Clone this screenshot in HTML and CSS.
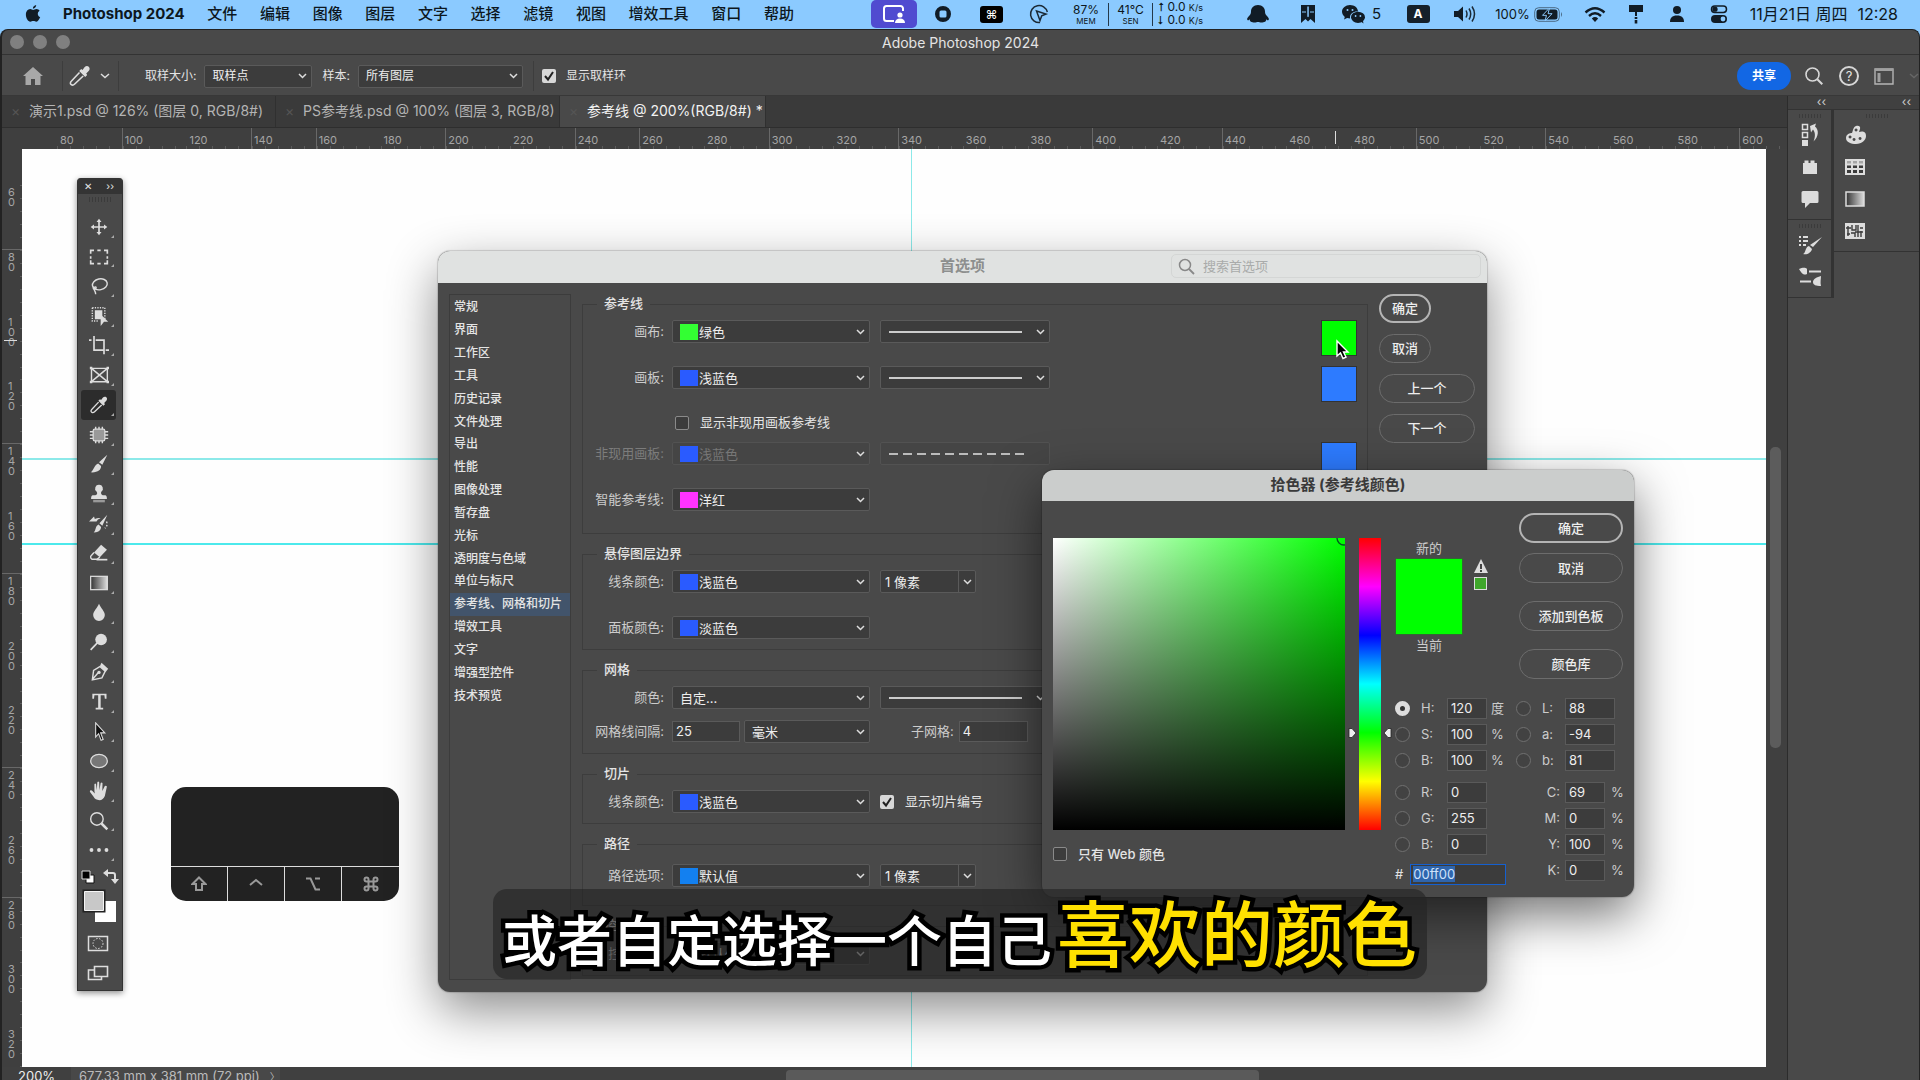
FILE: index.html
```html
<!DOCTYPE html>
<html lang="zh-CN">
<head>
<meta charset="utf-8">
<title>Adobe Photoshop 2024</title>
<meta name="viewport" content="width=device-width, initial-scale=1">
<link rel="stylesheet" href="styles.css">
</head>
<body>
<header class="menubar">
  <svg class="apple" viewBox="0 0 18 20"><path d="M12.6 0c.1 2-1.700 4-3.700 4C8.700 2 10.600.2 12.600 0zM9.200 5.400c.9 0 2-1 3.700-1 1.500 0 2.800.8 3.500 1.900-3 1.900-2.400 6 .7 7.200-.8 2.300-2.500 5.200-4.300 5.200-1.300 0-1.800-.8-3.400-.8s-2.100.8-3.400.8C3.600 18.700 1 14.700 1 10.900 1 7 3.300 4.600 5.800 4.500c1.500 0 2.500.9 3.400.9z"/></svg>
  <nav class="menus">
    <a href="#" class="appname">Photoshop 2024</a>
    <a href="#">文件</a><a href="#">编辑</a><a href="#">图像</a><a href="#">图层</a><a href="#">文字</a><a href="#">选择</a><a href="#">滤镜</a><a href="#">视图</a><a href="#">增效工具</a><a href="#">窗口</a><a href="#">帮助</a>
  </nav>
  <div class="status">
    <span class="sharing"><svg width="24" height="20" viewBox="0 0 24 20"><path d="M12 17H4.500A2.500 2.500 0 0 1 2 14.500v-10A2.500 2.500 0 0 1 4.500 2h14A2.500 2.500 0 0 1 21 4.500V7" fill="none" stroke="#fff" stroke-width="2"/><circle cx="18" cy="11" r="2.600" fill="#fff"/><path d="M13 19c0-3 2-4.500 5-4.500s5 1.500 5 4.500z" fill="#fff"/></svg></span>
    <svg width="18" height="18" viewBox="0 0 18 18"><path fill-rule="evenodd" d="M9 1a8 8 0 1 0 0 16A8 8 0 0 0 9 1zM7 5.500h4q1.500 0 1.500 1.500v4q0 1.500-1.500 1.500H7q-1.500 0-1.500-1.500V7q0-1.500 1.500-1.500z"/></svg>
    <span class="cmdbox">⌘</span>
    <svg width="20" height="20" viewBox="0 0 20 20"><path d="M11 18.500A8.500 8.500 0 1 1 18.300 8M7.500 7l9.500 3-4.300 1.800L11 16.500z" fill="none" stroke="#1b2a36" stroke-width="1.500"/></svg>
    <span class="stat">87%<small>MEM</small></span>
    <span class="stat stat--bars">41°C<small>SEN</small></span>
    <span class="net"><span>⭡ 0.0 <small>K/s</small></span><span>⭣ 0.0 <small>K/s</small></span></span>
    <span></span>
    <svg width="26" height="20" viewBox="0 0 26 20"><path d="M13 1c4.500 0 7 3 7 6.500 0 2 .5 3 2 4.500 1.500 1.600 2.500 3 1.500 4-.7.600-1.700-.3-2.500-.8 1 2-2 3.300-4.500 3.300-1.500 0-2.500-.5-3.500-.5s-2 .5-3.500.5c-2.500 0-5.500-1.300-4.500-3.300-.8.500-1.800 1.400-2.500.8-1-1 0-2.400 1.500-4 1.500-1.500 2-2.500 2-4.500C6 4 8.500 1 13 1z"/></svg>
    <svg width="18" height="18" viewBox="0 0 18 18"><path fill-rule="evenodd" d="M2 0h14v18l-4.500-4-2.500 2.500L6.500 14 2 18zM8.300 1.500v10L9 12.200l.8-.7v-10zM3 6.500h4v1H3zm8 0h4v1h-4z"/></svg>
    <span class="chat"><svg width="25" height="20" viewBox="0 0 25 20"><path d="M9 1c4.400 0 8 2.800 8 6.500h-1c-4 0-7 2.500-7 6 0 .3 0 .7.100 1-1 0-2-.1-3-.4L3 15.500l.8-2.600C2.100 11.700 1 9.700 1 7.600 1 4 4.600 1 9 1z"/><ellipse cx="17" cy="13.300" rx="7" ry="5.600"/><path d="M19 17l3.500 2.500-.7-3.500z"/><g fill="#8bcaff"><circle cx="6.500" cy="6" r="1"/><circle cx="11.500" cy="6" r="1"/><circle cx="14.600" cy="12" r=".9"/><circle cx="19.400" cy="12" r=".9"/></g></svg>5</span>
    <span class="imebox">A</span>
    <svg width="23" height="18" viewBox="0 0 23 18"><path d="M1 6h4l5-4.500v15L5 12H1z"/><path d="M13 5.500q2 3.500 0 7M16 3.500q3.400 5.500 0 11M19 1.500q5 7.500 0 15" fill="none" stroke="#1b2a36" stroke-width="1.500"/></svg>
    <span class="power">100%<svg width="29" height="15" viewBox="0 0 29 15"><rect x=".7" y=".7" width="24.600" height="13.600" rx="4" fill="none" stroke="#4b6a85"/><rect x="2.500" y="2.500" width="21" height="10" rx="2.500"/><path d="M27 5q2 2.500 0 5z" fill="#4b6a85"/><path d="M15.500 1l-7 7.300h4L11 14l7-7.300h-4z" fill="#111" stroke="#8bcaff"/></svg></span>
    <svg width="22" height="17" viewBox="0 0 22 17"><path d="M1.500 6.500q9.500-8.500 19 0M5 10q6-5.500 12 0" fill="none" stroke="#111c26" stroke-width="2.400"/><path d="M7.800 12.500q3.200-2.800 6.400 0L11 16z"/></svg>
    <svg width="16" height="20" viewBox="0 0 16 20"><path d="M1 1h14v7H1zM7 8h2v4H7zM6.700 13h2.600v2H6.700zM6.700 16h2.600v3.500H6.700z"/></svg>
    <svg width="16" height="18" viewBox="0 0 16 18"><circle cx="8" cy="5" r="4"/><path d="M1 17c0-4 2-6.500 7-6.500s7 2.500 7 6.500z"/></svg>
    <svg width="18" height="20" viewBox="0 0 18 20"><rect x="1.500" y="2" width="15" height="6.500" rx="3.200" fill="none" stroke="#111c26" stroke-width="1.500"/><circle cx="5" cy="5.200" r="2.600"/><rect x="1" y="11" width="16" height="8" rx="4"/><circle cx="13" cy="15" r="2.400" fill="#8bcaff"/></svg>
    <span class="clock"><span>11月21日 周四</span><time>12:28</time></span>
  </div>
</header>

<main class="window">
  <div class="titlebar">
    <span class="lights"><i></i><i></i><i></i></span>
    <h1>Adobe Photoshop 2024</h1>
    <span></span>
  </div>

  <div class="options">
    <svg class="home" width="22" height="20" viewBox="0 0 22 20"><path d="M11 1l10 9h-2.500v9H13v-6H9v6H3.500v-9H1z" fill="#a8a8a8"/></svg>
    <span class="dropper"><svg width="24" height="24"><use href="#eyedropper"/></svg><svg class="chev" viewBox="0 0 10 6"><path d="M1 1l4 3.500L9 1"/></svg></span>
    <label for="size">取样大小:</label>
    <select id="size" class="size"><option>取样点</option></select>
    <label for="sample">样本:</label>
    <select id="sample" class="sample"><option>所有图层</option></select>
    <label class="ring"><input type="checkbox" checked>显示取样环</label>
    <div class="options-end">
      <button class="share" type="button">共享</button>
      <svg width="20" height="20" viewBox="0 0 20 20"><circle cx="8.500" cy="8.500" r="6.500" fill="none" stroke="#d6d6d6" stroke-width="1.600"/><path d="M13.300 13.300l5 5" stroke="#d6d6d6" stroke-width="2"/></svg>
      <span class="help">?</span>
      <svg width="20" height="17" viewBox="0 0 20 17"><path d="M1 1h18v15H1z" fill="none" stroke="#b5b5b5" stroke-width="1.400"/><path d="M1 1h18v2H1zM3.500 5h3v9h-3z" fill="#a0a0a0"/></svg>
      <svg class="chev dim" viewBox="0 0 10 6"><path d="M1 1l4 3.500L9 1"/></svg>
    </div>
  </div>

  <div class="workspace">
    <section class="document">
      <nav class="tabs">
        <a href="#" class="tab tab1"><i>×</i>演示1.psd @ 126% (图层 0, RGB/8#)</a>
        <a href="#" class="tab tab2"><i>×</i>PS参考线.psd @ 100% (图层 3, RGB/8)</a>
        <a href="#" class="tab tab3 active"><i>×</i>参考线 @ 200%(RGB/8#) *</a>
      </nav>
      <div class="hruler">
        <ol>
          <li>80</li><li class="t">100</li><li>120</li><li class="t">140</li><li class="t">160</li><li>180</li><li class="t">200</li><li>220</li><li class="t">240</li><li class="t">260</li><li>280</li><li class="t">300</li><li>320</li><li class="t">340</li><li>360</li><li>380</li><li class="t">400</li><li>420</li><li class="t">440</li><li class="here">460</li><li>480</li><li class="t">500</li><li>520</li><li class="t">540</li><li>560</li><li>580</li><li class="t">600</li>
        </ol>
      </div>
      <div class="view">
        <ol class="vruler">
          <li>60</li><li class="t">80</li><li class="here">100</li><li>120</li><li class="t">140</li><li>160</li><li class="t">180</li><li>200</li><li>220</li><li class="t">240</li><li>260</li><li class="t">280</li><li>300</li><li>320</li>
        </ol>
        <div class="canvas"><i class="guide g1"></i><i class="guide g2"></i><i class="guide g3"></i></div>
        <div class="vscroll"><i></i></div>
      </div>
      <footer class="statusbar">
        <span class="zoomlevel">200%</span><span class="docsize">677.33 mm x 381 mm (72 ppi)<b>〉</b></span>
        <i class="hthumb"></i>
      </footer>
    </section>
    <aside class="dock">
      <div class="dock-col">
        <div class="dock-head">‹‹</div>
        <div class="dock-group">
          <svg width="20" height="26" viewBox="0 0 20 26"><path d="M2.500 2.500h5v5h-5zM2.500 10.500h5v5h-5z" fill="none" stroke="#ddd" stroke-width="1.500"/><path d="M2 18h6v6H2zM10 4l6-2.500-1 3c4 3 4 10-1.500 15 2-5 2-9-.5-12l-2 3z" fill="#ddd"/></svg>
          <svg width="18" height="16" viewBox="0 0 18 16"><path d="M2 4h1.500V1.500h4V4h2V1.500h4V4H16v11H2z" fill="#ddd"/></svg>
          <svg width="20" height="20" viewBox="0 0 20 20"><path d="M3 2h14q1.500 0 1.500 1.500v9Q18.500 14 17 14h-7l-5 5v-5H3q-1.500 0-1.500-1.500v-9Q1.500 2 3 2z" fill="#ddd"/></svg>
        </div>
        <div class="dock-group">
          <svg width="26" height="22" viewBox="0 0 26 22"><path d="M2 2h2v2H2zM6 2h5v2H6zM2 6h2v2H2zM6 6h5v2H6zM2 10h2v2H2zM6 10h3v2H6zM25 3l-9 10-3-2zM12 12l3 3c-1 4-5 6-9 5 3-1 2-7 6-8z" fill="#ddd"/></svg>
          <svg width="26" height="22" viewBox="0 0 26 22"><path d="M2 3c3-1 6-2 8 0v5C6 10 4 6 2 3zM12 4.500h12v2H12zM3 14.500h11v2H3zM24 10c0 3-1 6 0 10-5 0-8-1-8-4s4-5 8-6z" fill="#ddd"/></svg>
        </div>
      </div>
      <div class="dock-col dock-col--wide">
        <div class="dock-head">‹‹</div>
        <div class="dock-group">
          <svg width="22" height="20" viewBox="0 0 22 20"><path fill-rule="evenodd" d="M11 1c2-1 5 0 4 3l-1 3c3-1 7-1 7 4 0 4-4 8-10 8-5 0-10-2-10-6s4-5 6-5c1-2 1-6 4-7zM5 10.500a1.500 1.500 0 1 0 .1 0zM9 13a1.500 1.500 0 1 0 .1 0zM15 12a1.500 1.500 0 1 0 .1 0zM11 3.500a1.500 1.500 0 1 0 .1 0z" fill="#ddd"/></svg>
          <svg width="20" height="16" viewBox="0 0 20 16"><path d="M0 0h20v16H0z" fill="#ddd"/><path d="M2 2h4v2.500H2zM8 2h4v2.500H8zM14 2h4v2.500h-4z" fill="#a5a5a5"/><path d="M2 6.500h4V9H2zM8 6.500h4V9H8zM14 6.500h4V9h-4zM2 11h4v3H2zM8 11h4v3H8zM14 11h4v3h-4z" fill="#3b3b3b"/></svg>
          <svg width="20" height="16" viewBox="0 0 20 16"><rect x="1" y="1" width="18" height="14" fill="url(#grad)" stroke="#ddd" stroke-width="1.500"/></svg>
          <svg width="20" height="16" viewBox="0 0 20 16"><path d="M0 0h20v16H0z" fill="#ddd"/><path d="M3 3v10M1 5h5M7 2v5h4V2M6 10h4v4M13 2v12M15 5h3M16 8v6M10 9h8M2 11h3" stroke="#3b3b3b" stroke-width="1.400" fill="none"/></svg>
        </div>
      </div>
    </aside>
  </div>
</main>

<!-- floating tool palette -->
<aside class="tools">
  <div class="tools-head"><span>✕</span><span>››</span></div>
  <div class="grip"></div>
  <ul>
    <li><svg viewBox="0 0 24 24"><path d="M12 2l3 4h-2v5h5V9l4 3-4 3v-2h-5v5h2l-3 4-3-4h2v-5H6v2l-4-3 4-3v2h5V6H9z"/></svg></li>
    <li><svg viewBox="0 0 24 24"><path d="M2 8V4h4M10 4h4M18 4h4v4M22 11v3M22 16v4h-4M14 20h-4M6 20H2v-4M2 14v-3" class="ln"/></svg></li>
    <li><svg viewBox="0 0 24 24"><ellipse cx="13" cy="10" rx="9" ry="6.500" class="ln thin" transform="rotate(-12 13 10)"/><path d="M6 13c-2 2 0 4 2 2s-2-3-2 0 2 3 2 7" class="ln thin"/></svg></li>
    <li><svg viewBox="0 0 24 24"><path d="M4 2h15v14M4 2v16h8" class="ln thin" stroke-dasharray="1.500 1.500"/><path d="M7 5h9v8l-2-2v5H7zM14 10l9 9h-5l-4 5z"/></svg></li>
    <li><svg viewBox="0 0 24 24"><path d="M6 0v17h12M0 5h3M8 5h10v17M20 17h4" class="ln"/></svg></li>
    <li><svg viewBox="0 0 24 24"><path d="M3 4h19v16H3zM3 4l19 16M22 4L3 20" class="ln thin"/><path d="M1 2h3v3H1zM21 2h3v3h-3zM1 19h3v3H1zM21 19h3v3h-3z"/></svg></li>
    <li class="on"><svg viewBox="0 0 24 24"><g id="eyedropper" fill="#ddd"><path d="M20.500 2.500c-1.300-1-2.800-.5-4 .8L14.500 6l-1.300-1-2 2 6 6 2-2-1-1.400 2-2c1.800-1.500 2-3.700.3-5.100z"/><path d="M11.500 8.500l-8 8.500c-1.500 1.500-1.500 3 0 3.800 1 .6 2.200.2 3.200-.8l8.500-8" fill="none" stroke="#ddd" stroke-width="1.600"/></g></svg></li>
    <li><svg viewBox="0 0 24 24"><rect x="5" y="5" width="14" height="14" rx="2" fill="#999" stroke="#ddd" stroke-width="1.500"/><path d="M8 2v3M12 2v3M16 2v3M8 19v3M12 19v3M16 19v3M1 8h4M1 12h4M1 16h4M19 8h4M19 12h4M19 16h4" class="ln thin"/></svg></li>
    <li><svg viewBox="0 0 24 24"><path d="M22 1l-6 12-4-3zM11 11.500l3.500 3c0 5-4 8-12.500 7.500 4-2 4-9 9-10.500z"/></svg></li>
    <li><svg viewBox="0 0 24 24"><path d="M12 1a4.500 4.500 0 0 1 3 8c-1.500 2 0 4 1.500 4.500h3q2 0 2 4.500h-19q0-4.500 2-4.500h3C10 13 10.500 11 9 9A4.500 4.500 0 0 1 12 1z"/><path d="M5 19h14v3H5z" fill="#999"/></svg></li>
    <li><svg viewBox="0 0 24 24"><path d="M22 1l-6 13-3.500-3zM11.500 12.500l3 3c0 4-4 7-9 6.500 3-2 2-8 6-9.500zM0 9l6-6 1 3q4-2 7-1-4 1-5 4z"/><path d="M21 9q2 5-2 8" class="ln thin" stroke-dasharray="2 2"/></svg></li>
    <li><svg viewBox="0 0 24 24"><path d="M14.500 2l7 6-8.500 9-7-5.500z"/><path d="M6 11.500L2 16q-.5 2 1.500 3.500h6L13 17" class="ln thin"/><path d="M9 19h13v2H9z"/></svg></li>
    <li><svg viewBox="0 0 24 24"><rect x="2" y="4" width="20" height="16" fill="url(#grad)" stroke="#ddd" stroke-width="1.500"/></svg></li>
    <li><svg viewBox="0 0 24 24"><path d="M12 1c2 5 7 9 7 13.500a7 7 0 0 1-14 0C5 10 10 6 12 1z"/></svg></li>
    <li><svg viewBox="0 0 24 24"><circle cx="14.500" cy="9" r="7"/><path d="M10 13l-8 8.500" class="ln"/></svg></li>
    <li><svg viewBox="0 0 24 24"><path d="M13 5.500L5.500 10 4 21.500 15.500 19l4-8zM4 21l7-8" class="ln thin"/><circle cx="12" cy="12.500" r="2"/><path d="M15 1l8 7-3 4-7-7z"/></svg></li>
    <li><svg viewBox="0 0 24 24"><path d="M4 2h17v6h-2l-.5-4H14v15h3v2H8v-2h3V4H6.500L6 8H4z"/></svg></li>
    <li><svg viewBox="0 0 24 24"><path d="M8 1l11 12h-5l3 8-2.500 1-3-8L8 18z" fill="#111" stroke="#ddd" stroke-width="1.300"/></svg></li>
    <li><svg viewBox="0 0 24 24"><ellipse cx="12" cy="12" rx="10" ry="8" fill="#777" stroke="#ddd" stroke-width="1.500"/></svg></li>
    <li><svg viewBox="0 0 24 24"><path d="M6.500 12V4q1-2 2 0l.8 7L10 1.500q1-2 2.200 0l.3 9.500L14 2.500q1.200-1.500 2.200 0L16 12l3-6q1.500-1 2.500.5L19 18q-2 5-6.500 5-5 0-7-4L1 13q0-2.500 2.500-1.500L7 15z"/></svg></li>
    <li><svg viewBox="0 0 24 24"><circle cx="9.500" cy="9.500" r="7.500" class="ln thin"/><path d="M15 15l7 7" stroke="#ddd" stroke-width="3"/></svg></li>
    <li><svg viewBox="0 0 24 24"><circle cx="3" cy="12" r="2.300"/><circle cx="12" cy="12" r="2.300"/><circle cx="21" cy="12" r="2.300"/></svg></li>
  </ul>
  <svg class="swatches" viewBox="0 3 44 125"><path d="M8 13h8v8H8z" fill="#fff" stroke="#111"/><path d="M4 9h8v8H4z" fill="#000" stroke="#ddd"/><path d="M29 11h6q2 0 2 2v7" fill="none" stroke="#ddd" stroke-width="2"/><path d="M25 11l5-4v8zM33 17h8l-4 5z" fill="#ddd"/><path d="M17 39h21v21H17z" fill="#fff"/><path d="M5.500 28.500h21v21h-21z" fill="#c8c8c8" stroke="#222" stroke-width="2"/><path d="M6.500 29.500h19v19h-19z" fill="none" stroke="#f5f5f5"/><path d="M10.500 74.500h19v14h-19z" fill="none" stroke="#ddd" stroke-width="1.500"/><circle cx="20" cy="81.500" r="5" fill="none" stroke="#ddd" stroke-dasharray="1.500 1.500"/><path d="M16.500 104.500h13v10h-13zM16 108h-5.500v9.500h13V115" fill="none" stroke="#ddd" stroke-width="1.600"/></svg>
</aside>

<!-- modifier key display -->
<div class="keys"><div class="keys-out"></div><div class="keys-row"><span><svg viewBox="0 0 16 16"><path d="M8 1.500L14.500 8H11v6H5V8H1.500z"/></svg></span><span><svg viewBox="0 0 16 16"><path d="M2 9l6-5 6 5"/></svg></span><span><svg viewBox="0 0 16 16"><path d="M1 2.500h4.500l5 11H15M10 2.500h5"/></svg></span><span><svg viewBox="0 0 16 16"><path d="M5.500 5.500h5v5h-5zM5.500 5.500h-2a2 2 0 1 1 2-2zM10.500 5.500v-2a2 2 0 1 1 2 2zM10.500 10.500h2a2 2 0 1 1-2 2zM5.500 10.500v2a2 2 0 1 1-2-2z"/></svg></span></div></div>

<section class="prefs" aria-label="首选项">
  <header class="prefs-head">
    <span></span><h2>首选项</h2>
    <label class="search"><svg width="17" height="17" viewBox="0 0 17 17"><circle cx="7" cy="7" r="5.500" fill="none" stroke="#888" stroke-width="1.500"/><path d="M11 11l5 5" stroke="#888" stroke-width="1.800"/></svg><input type="text" placeholder="搜索首选项"></label>
  </header>
  <div class="prefs-body">
    <nav class="cats">
      <a href="#">常规</a><a href="#">界面</a><a href="#">工作区</a><a href="#">工具</a><a href="#">历史记录</a><a href="#">文件处理</a><a href="#">导出</a><a href="#">性能</a><a href="#">图像处理</a><a href="#">暂存盘</a><a href="#">光标</a><a href="#">透明度与色域</a><a href="#">单位与标尺</a><a href="#" class="sel">参考线、网格和切片</a><a href="#">增效工具</a><a href="#">文字</a><a href="#">增强型控件</a><a href="#">技术预览</a>
    </nav>
    <form class="groups">
      <fieldset class="tall">
        <legend>参考线</legend>
        <div class="row"><label for="c1">画布:</label><select id="c1" class="color green"><option>绿色</option></select><select class="line" aria-label="画布线型"><option></option></select><button type="button" class="well lime" aria-label="画布颜色"></button></div>
        <div class="row"><label for="c2">画板:</label><select id="c2" class="color"><option>浅蓝色</option></select><select class="line" aria-label="画板线型"><option></option></select><button type="button" class="well" aria-label="画板颜色"></button></div>
        <div class="row row--check"><span></span><label class="check"><input type="checkbox">显示非现用画板参考线</label></div>
        <div class="row off"><label for="c3">非现用画板:</label><select id="c3" class="color" disabled><option>浅蓝色</option></select><select class="line dashed" disabled aria-label="非现用画板线型"><option></option></select><button type="button" class="well" aria-label="非现用画板颜色"></button></div>
        <div class="row row--end"><label for="c4">智能参考线:</label><select id="c4" class="color pink"><option>洋红</option></select></div>
      </fieldset>
      <fieldset>
        <legend>悬停图层边界</legend>
        <div class="row"><label for="c5">线条颜色:</label><select id="c5" class="color"><option>浅蓝色</option></select><select class="px" aria-label="线条宽度"><option>1 像素</option></select></div>
        <div class="row row--end"><label for="c6">面板颜色:</label><select id="c6" class="color"><option>淡蓝色</option></select></div>
      </fieldset>
      <fieldset>
        <legend>网格</legend>
        <div class="row row--close"><label for="c7">颜色:</label><select id="c7"><option>自定...</option></select><select class="line" aria-label="网格线型"><option></option></select></div>
        <div class="row row--end"><label for="gap">网格线间隔:</label><span class="pair"><input id="gap" type="text" value="25"><select aria-label="单位"><option>毫米</option></select></span><span class="sub"><label for="subg">子网格:</label><input id="subg" type="text" value="4"></span></div>
      </fieldset>
      <fieldset>
        <legend>切片</legend>
        <div class="row row--end"><label for="c8">线条颜色:</label><select id="c8" class="color"><option>浅蓝色</option></select><label class="check"><input type="checkbox" checked>显示切片编号</label></div>
      </fieldset>
      <fieldset class="paths">
        <legend>路径</legend>
        <div class="row row--end"><label for="c9">路径选项:</label><select id="c9" class="color azure"><option>默认值</option></select><select class="px" aria-label="路径宽度"><option>1 像素</option></select></div>
      </fieldset>
      <fieldset>
        <legend>控件</legend>
        <div class="row row--end"><label for="c10">控件颜色:</label><select id="c10" class="color azure"><option>默认值</option></select></div>
      </fieldset>
    </form>
    <div class="actions"><button type="button" class="pill main short">确定</button><button type="button" class="pill short">取消</button><button type="button" class="pill">上一个</button><button type="button" class="pill">下一个</button></div>
  </div>
</section>

<section class="picker" aria-label="拾色器">
  <header class="picker-head"><h2>拾色器 (参考线颜色)</h2></header>
  <div class="picker-body">
    <div class="picker-left">
      <div class="spectrum">
        <div class="sv"><svg width="10" height="10" viewBox="0 0 10 10"><circle cx="9" cy="0" r="7" fill="none" stroke="#052" stroke-width="1.300"/></svg></div>
        <div class="hue"><svg width="44" height="12" viewBox="0 0 44 12"><path d="M1 1.500h3L8 6l-4 4.500H1zM43 1.500h-3L36 6l4 4.500h3z" fill="#eee" stroke="#222" stroke-width=".8"/></svg></div>
      </div>
      <label class="check"><input type="checkbox">只有 Web 颜色</label>
    </div>
    <div class="picker-right">
      <div class="picker-top">
        <div class="compare"><span>新的</span><i></i><span>当前</span></div>
        <div class="gamut"><svg width="14" height="14" viewBox="0 0 14 14"><path d="M7 0l7 14H0z" fill="#ddd"/><path d="M7 5v5M7 11v2" stroke="#333" stroke-width="1.800"/></svg><i></i></div>
        <div class="picker-actions"><button type="button" class="pill main">确定</button><button type="button" class="pill">取消</button><button type="button" class="pill apart">添加到色板</button><button type="button" class="pill apart">颜色库</button></div>
      </div>
      <div class="values">
        <div>
          <div class="v"><input type="radio" name="m" id="mh" checked><label for="mh">H:</label><input type="text" value="120" aria-label="H"><span>度</span></div>
          <div class="v"><input type="radio" name="m" id="ms"><label for="ms">S:</label><input type="text" value="100" aria-label="S"><span>%</span></div>
          <div class="v"><input type="radio" name="m" id="mb"><label for="mb">B:</label><input type="text" value="100" aria-label="B"><span>%</span></div>
          <div class="v space"><input type="radio" name="m" id="mr"><label for="mr">R:</label><input type="text" value="0" aria-label="R"></div>
          <div class="v"><input type="radio" name="m" id="mg"><label for="mg">G:</label><input type="text" value="255" aria-label="G"></div>
          <div class="v"><input type="radio" name="m" id="mbl"><label for="mbl">B:</label><input type="text" value="0" aria-label="B"></div>
          <div class="hex"><span>#</span><span class="hexbox" role="textbox" aria-label="十六进制" contenteditable><mark>00ff00</mark></span></div>
        </div>
        <div>
          <div class="v lab"><input type="radio" name="m" id="ml"><label for="ml">L:</label><input type="text" value="88" aria-label="L"></div>
          <div class="v lab"><input type="radio" name="m" id="ma"><label for="ma">a:</label><input type="text" value="-94" aria-label="a"></div>
          <div class="v lab"><input type="radio" name="m" id="mlb"><label for="mlb">b:</label><input type="text" value="81" aria-label="b"></div>
          <div class="v cmyk space"><label for="kc">C:</label><input type="text" id="kc" value="69"><span>%</span></div>
          <div class="v cmyk"><label for="km">M:</label><input type="text" id="km" value="0"><span>%</span></div>
          <div class="v cmyk"><label for="ky">Y:</label><input type="text" id="ky" value="100"><span>%</span></div>
          <div class="v cmyk"><label for="kk">K:</label><input type="text" id="kk" value="0"><span>%</span></div>
        </div>
      </div>
    </div>
  </div>
</section>

<svg class="pointer" width="16" height="22" viewBox="0 0 16 22"><path d="M2 2v15l3.500-3 2.500 5.500 3-1.300-2.500-5.200H13z" fill="#000" stroke="#fff" stroke-width="1.400"/></svg>

<p class="caption">或者自定选择一个自己<em>喜欢的颜色</em></p>

<svg class="defs" width="0" height="0"><defs><linearGradient id="grad"><stop offset="0" stop-color="#333"/><stop offset="1" stop-color="#ddd"/></linearGradient></defs></svg>
</body>
</html>
```

FILE: styles.css
```css
:root {
  --panel: #494949;
  --field: #3c3c3c;
  --edge: #5a5a5a;
  --text: #e4e4e4;
  --blue: #2a5bff;
  --chev: url("data:image/svg+xml,%3Csvg xmlns='http://www.w3.org/2000/svg' width='9' height='6'%3E%3Cpath d='M1 1l3.500 3.500L8 1' fill='none' stroke='%23ddd' stroke-width='1.500'/%3E%3C/svg%3E");
  --tick: url("data:image/svg+xml,%3Csvg xmlns='http://www.w3.org/2000/svg' width='14' height='14'%3E%3Cpath d='M3 7l3 3.500L11 3' fill='none' stroke='%23222' stroke-width='2'/%3E%3C/svg%3E");
}
* { box-sizing: border-box; }
body {
  margin: 0;
  height: 100vh;
  overflow: hidden;
  display: flex;
  flex-direction: column;
  background: #8bcaff;
  color: var(--text);
  font: 13px/20px Inter, "Noto Sans CJK SC", sans-serif;
}
h1, h2, p, ol, ul { margin: 0; padding: 0; font-weight: 400; list-style: none; }
a { color: inherit; text-decoration: none; }
i { font-style: normal; }
svg { flex: none; display: block; }
select, input, button { font: inherit; color: inherit; margin: 0; }
.defs { position: absolute; }

/* inputs */
select {
  appearance: none;
  height: 23px;
  padding: 0 18px 0 7px;
  line-height: 20px;
  color: #eee;
  border: 1px solid var(--edge);
  border-radius: 2px;
  background: var(--chev) no-repeat right 4px center, var(--field);
}
input[type="text"] {
  height: 21px;
  min-width: 0;
  padding: 0 3px;
  color: #eee;
  border: 1px solid var(--edge);
  background: var(--field);
  border-radius: 0;
}
input[type="checkbox"] {
  appearance: none;
  width: 14px;
  height: 14px;
  border: 1px solid #8a8a8a;
  border-radius: 2px;
  background: var(--field);
}
input[type="checkbox"]:checked { background: var(--tick) center, #d8d8d8; border: 0; }
input[type="radio"] {
  appearance: none;
  width: 15px;
  height: 15px;
  border: 1px solid #707070;
  border-radius: 50%;
  background: #424242;
}
input[type="radio"]:checked { border: 5px solid #ddd; background: #333; }
.pill {
  width: 96px;
  height: 29px;
  padding: 0 0 1px;
  line-height: 20px;
  border: 1px solid #6c6c6c;
  border-radius: 15px;
  background: none;
  color: #eee;
  font-weight: 500;
}
.pill.main { border: 2px solid #b4b4b4; }
.check { display: flex; align-items: center; gap: 11px; }

/* system menu bar */
.menubar {
  flex: none;
  height: 29px;
  display: flex;
  align-items: center;
  padding: 0 22px 1px 25px;
  color: #0d1720;
  font-size: 15px;
  font-weight: 500;
}
.menubar svg { fill: #111c26; }
.apple { width: 16px; height: 18px; margin-right: 22px; }
.menus { width: 731px; display: flex; justify-content: space-between; white-space: nowrap; }
.appname { font-weight: 700; }
.status {
  margin-left: auto;
  height: 28px;
  display: grid;
  grid-template-columns: 46px 52px 45px 50px 44px 45px 55px 25px 50px 50px 56px 58px 34px 96px 36px 46px 36px 48px 155px;
  align-items: center;
  justify-items: center;
  white-space: nowrap;
  font-weight: 400;
}
.sharing {
  width: 46px;
  height: 28px;
  display: grid;
  place-items: center;
  background: #504bd0;
  border-radius: 5px;
}
.menubar .sharing svg { fill: none; }
.cmdbox, .imebox {
  width: 23px;
  height: 17px;
  border-radius: 3px;
  background: #000;
  color: #fff;
  text-align: center;
  font-size: 12px;
  line-height: 17px;
}
.imebox { height: 18px; background: #15202a; line-height: 18px; font-weight: 700; }
.stat { display: grid; text-align: center; font-size: 12px; line-height: 14px; }
.stat small { font-size: 8px; line-height: 9px; }
.stat--bars { width: 45px; border: solid #24394a; border-width: 0 1px; }
.net { display: grid; font-size: 12px; line-height: 12px; }
.net small { font-size: 9px; }
.chat, .power { display: flex; align-items: center; gap: 6px; }
.power { font-size: 13px; gap: 4px; }
.clock { display: flex; gap: 10px; justify-self: end; font-size: 16px; }

/* application window */
.window {
  flex: 1;
  min-height: 0;
  display: flex;
  flex-direction: column;
  border: solid #222;
  border-width: 1px 1px 0 2px;
  border-radius: 8px 8px 0 0;
  overflow: hidden;
  background: var(--panel);
}
.titlebar {
  flex: none;
  height: 25px;
  display: grid;
  grid-template-columns: 1fr auto 1fr;
  align-items: center;
  border-bottom: 1px solid #333;
}
.titlebar h1 { font-size: 14px; line-height: 20px; padding-top: 2px; }
.lights { display: flex; gap: 9px; padding-left: 8px; }
.lights i { width: 14px; height: 14px; border-radius: 50%; background: #808080; }
.options {
  flex: none;
  height: 41px;
  display: flex;
  align-items: center;
  padding: 2px 0 0 20px;
  font-size: 12px;
  border-bottom: 1px solid #383838;
}
.dropper {
  height: 30px;
  display: flex;
  align-items: center;
  gap: 8px;
  width: 57px;
  padding-left: 5px;
  margin: 0 26px 0 18px;
  border: solid #3d3d3d;
  border-width: 0 1px;
}
.chev { width: 10px; height: 6px; fill: none; stroke: #ddd; stroke-width: 1.500; }
.chev.dim { stroke: #666; }
.size { width: 108px; margin: 0 10px 0 8px; }
.sample { width: 165px; margin: 0 10px 0 8px; }
.ring { display: flex; align-items: center; gap: 10px; height: 30px; padding-left: 8px; border-left: 1px solid #3d3d3d; }
.options-end { margin-left: auto; display: flex; align-items: center; gap: 15px; }
.share {
  width: 54px;
  height: 28px;
  margin-right: -2px;
  padding: 0;
  border: 0;
  border-radius: 14px;
  background: #1267e4;
  color: #fff;
  font-weight: 700;
}
.help {
  width: 20px;
  height: 20px;
  border: 2px solid #d6d6d6;
  border-radius: 50%;
  text-align: center;
  font-size: 13px;
  line-height: 16px;
}
.workspace { flex: 1; min-height: 0; display: flex; }
.document { flex: 1; min-width: 0; display: flex; flex-direction: column; background: #3a3a3a; }
.tabs { flex: none; height: 32px; display: flex; border-bottom: 1px solid #2e2e2e; }
.tab {
  display: flex;
  align-items: center;
  gap: 9px;
  padding: 0 0 2px 9px;
  border-right: 1px solid #303030;
  font-size: 14px;
  color: #b4b4b4;
  white-space: nowrap;
}
.tab i { width: 9px; color: #555; }
.tab1 { width: 274px; }
.tab2 { width: 284px; }
.tab3 { width: 206px; }
.tab.active { background: var(--panel); color: #f2f2f2; }

/* rulers */
.hruler { flex: none; height: 21px; padding-left: 55px; overflow: hidden; background: #3f3f3f; }
.hruler ol { display: flex; height: 21px; margin-right: -17px; }
.hruler li, .vruler li {
  position: relative;
  flex: 1 1 0;
  color: #a5a5a5;
}
.hruler li {
  padding: 4px 0 0 3px;
  font-size: 11px;
  line-height: 16px;
  background: repeating-linear-gradient(90deg, #5c5c5c 0 1px, transparent 1px 13px) bottom / 100% 3px no-repeat;
}
.hruler li.t { border-left: 1px solid #686868; padding-left: 2px; }
.hruler .here::after { content: ""; position: absolute; left: 49px; top: 3px; width: 1px; height: 13px; background: #ddd; }
.view { flex: 1; min-height: 0; display: flex; }
.vruler {
  flex: none;
  width: 20px;
  margin-bottom: -24px;
  padding-top: 36px;
  display: flex;
  flex-direction: column;
  background: #3f3f3f;
}
.vruler li {
  padding: 2px 6px 0;
  width: 20px;
  font-size: 11px;
  line-height: 10px;
  word-break: break-all;
  background: repeating-linear-gradient(180deg, #5c5c5c 0 1px, transparent 1px 13px) right / 2px 100% no-repeat;
}
.vruler li.t { border-top: 1px solid #686868; }
.vruler .here::after { content: ""; position: absolute; left: 2px; top: 25px; width: 13px; height: 1px; background: #ddd; }
.canvas { flex: 1; position: relative; background: #fefefe; }
.guide { position: absolute; background: #8ce9e9; }
.g1 { left: 0; right: 0; top: 309px; height: 2px; }
.g2 { left: 0; right: 0; top: 394px; height: 2px; background: #4ce9ec; }
.g3 { top: 0; bottom: 0; left: 51%; width: 1px; }
.vscroll { width: 21px; padding: 298px 6px 0 4px; background: #404040; }
.vscroll i { display: block; height: 301px; border-radius: 5px; background: #5c5c5c; }
.statusbar {
  flex: none;
  position: relative;
  height: 13px;
  overflow: hidden;
  display: flex;
  background: #404040;
  font-size: 13px;
  line-height: 19px;
}
.zoomlevel { width: 69px; padding-left: 16px; color: #eee; }
.docsize { width: 209px; padding-left: 8px; background: #484848; color: #bbb; white-space: nowrap; }
.docsize b { margin-left: 10px; font-weight: 400; font-size: 10px; }
.hthumb { width: 473px; height: 14px; margin: 3px 0 0 506px; border-radius: 4px; background: #5a5a5a; }

/* right dock */
.dock { flex: none; width: 132px; display: flex; border-left: 1px solid #2c2c2c; }
.dock-col { width: 46px; }
.dock-col--wide { flex: 1; }
.dock-head { height: 14px; padding-right: 8px; background: #404040; color: #ccc; text-align: right; font-size: 12px; line-height: 12px; border-bottom: 1px solid #333; }
.dock-group {
  display: grid;
  grid-auto-rows: 32px;
  place-items: center;
  padding: 9px 0 4px;
  border: solid #333;
  border-width: 0 3px 1px 0;
  background: repeating-linear-gradient(90deg, #3b3b3b 0 1px, transparent 1px 3px) center 4px / 22px 4px no-repeat;
}
.dock-col + .dock-col .dock-group { justify-items: start; padding-left: 11px; border-right-width: 0; }

/* tool palette */
.tools {
  position: absolute;
  left: 77px;
  top: 178px;
  width: 46px;
  background: var(--panel);
  border: 1px solid #333;
  border-width: 0 1px 1px;
  border-radius: 4px 4px 0 0;
  box-shadow: 0 2px 6px rgba(0, 0, 0, .45);
}
.tools-head {
  height: 16px;
  padding: 0 8px 0 6px;
  display: flex;
  justify-content: space-between;
  border-radius: 4px 4px 0 0;
  background: #343434;
  font-size: 10px;
  line-height: 16px;
}
.grip { width: 22px; height: 5px; margin: 3px auto 10px; background: repeating-linear-gradient(90deg, #3b3b3b 0 1px, transparent 1px 3px); }
.tools ul { height: 653px; display: flex; flex-direction: column; }
.tools li { position: relative; flex: 1; display: grid; place-items: center; margin: 0 6px 0 3px; }
.tools li svg { width: 20px; height: 20px; fill: #ddd; }
.tools li::after { content: ""; position: absolute; right: 2px; bottom: 4px; border: solid transparent; border-width: 0 0 3px 3px; border-bottom-color: #aaa; }
.tools li.on { background: #2c2c2c; border-radius: 3px; }
.tools .ln { fill: none; stroke: #ddd; stroke-width: 2; }
.tools .thin { stroke-width: 1.700; }
.swatches { width: 44px; height: 125px; }

/* key display */
.keys { position: absolute; left: 171px; top: 787px; width: 228px; border-radius: 15px; overflow: hidden; background: #222; }
.keys-out { height: 80px; border-bottom: 1px solid #ddd; }
.keys-row { display: grid; grid-template-columns: repeat(4, 1fr); height: 34px; }
.keys-row span { display: grid; place-items: center; border-right: 1px solid #ddd; }
.keys-row span:last-child { border: 0; }
.keys-row svg { width: 16px; height: 16px; fill: none; stroke: #999; stroke-width: 2; }

/* preferences window */
.prefs {
  position: absolute;
  left: 438px;
  top: 251px;
  width: 1049px;
  border-radius: 12px;
  background: var(--panel);
  box-shadow: 0 0 1px 1px rgba(0, 0, 0, .15), 0 18px 50px rgba(0, 0, 0, .45);
}
.prefs-head {
  height: 32px;
  display: grid;
  grid-template-columns: 1fr auto 1fr;
  align-items: center;
  padding: 0 6px 2px;
  border-radius: 12px 12px 0 0;
  background: #e0e2e1;
}
.prefs-head h2 { font-size: 15px; font-weight: 700; color: #8d8f8e; }
.search {
  width: 310px;
  height: 24px;
  margin-left: auto;
  display: flex;
  align-items: center;
  gap: 5px;
  padding-left: 6px;
  border: 1px solid #d4d6d5;
  border-radius: 5px;
}
.search input[type="text"] { border: 0; background: none; }
.search input::placeholder { color: #a9abaa; opacity: 1; }
.prefs-body { display: flex; padding: 11px 12px 12px 11px; }
.cats {
  width: 122px;
  height: 686px;
  padding-top: 1px;
  border: 1px solid #3c3c3c;
  font-size: 12px;
  font-weight: 500;
  display: grid;
  grid-template-rows: repeat(18, minmax(0, 1fr));
  padding-bottom: 272px;
}
.cats a { display: flex; align-items: center; padding-left: 4px; white-space: nowrap; }
.cats .sel { background: #42546b; }
.groups { width: 786px; margin: 0 11px; display: flex; flex-direction: column; gap: 10px; }
fieldset { margin: 0; min-width: 0; padding: 6px 10px 10px 0; border: 1px solid #3d3d3d; }
fieldset.tall { padding-bottom: 22px; }
fieldset.paths { padding: 10px 10px 18px 0; }
legend { margin-left: 14px; padding: 0 7px 2px; font-weight: 500; line-height: 18px; }
.row {
  height: 46px;
  display: grid;
  grid-template-columns: 79px 198px 170px 1fr;
  column-gap: 10px;
  line-height: 23px;
  align-items: start;
  color: #ccc;
  white-space: nowrap;
}
.row > label:first-child { text-align: right; margin-right: -2px; }
.row--check { height: 30px; }
.row--end { height: 23px; }
.row--close { height: 34px; }
.row .check { color: var(--text); }
.row--check .check { padding-left: 3px; line-height: 21px; }
.color {
  padding-left: 26px;
  background: var(--chev) no-repeat right 4px center, linear-gradient(var(--sw, var(--blue)), var(--sw, var(--blue))) no-repeat 7px center / 18px 16px, var(--field);
}
.green { --sw: #33ff33; }
.pink { --sw: #ff33ff; }
.azure { --sw: #1380f0; }
.line { background: var(--chev) no-repeat right 4px center, linear-gradient(#ccc, #ccc) no-repeat 8px center / 133px 2px, var(--field); }
.dashed { background: repeating-linear-gradient(90deg, #bbb 0 9px, transparent 9px 14px) no-repeat 8px center / 135px 2px; }
.row select:disabled { opacity: 1; color: #777; background-color: #454545; border-color: #525252; }
.off label { color: #7c7c7c; }
.px { width: 96px; padding-left: 4px; background: var(--chev) no-repeat right 3px center, linear-gradient(var(--edge), var(--edge)) no-repeat right 16px top / 1px 100%, var(--field); }
.well { justify-self: end; width: 36px; height: 36px; padding: 0; border: 1px solid #333; background: #2d7bff; }
.well.lime { background: #00ff00; }
.pair { display: grid; grid-template-columns: 68px 1fr; gap: 4px; align-items: center; }
.sub { display: flex; gap: 5px; padding-left: 31px; align-items: center; }
.sub input { width: 69px; }
.actions { display: flex; flex-direction: column; gap: 11px; }
.pill.short { width: 52px; }

/* colour picker window */
.picker {
  position: absolute;
  left: 1042px;
  top: 470px;
  width: 592px;
  border-radius: 12px;
  background: var(--panel);
  box-shadow: 0 0 1px 1px rgba(0, 0, 0, .15), 0 18px 50px rgba(0, 0, 0, .55);
}
.picker-head { height: 31px; display: grid; place-items: center; padding-bottom: 1px; border-radius: 12px 12px 0 0; background: #cbcdcc; color: #3a3a3a; }
.picker-head h2 { font-size: 15px; font-weight: 700; }
.picker-body { display: flex; gap: 14px; padding: 12px 11px 10px 11px; }
.picker-left { padding-top: 25px; }
.spectrum { display: flex; gap: 14px; margin-bottom: 14px; }
.sv {
  position: relative;
  width: 292px;
  height: 292px;
  background: linear-gradient(transparent, #000), linear-gradient(90deg, #fff, #0f0);
}
.sv svg { position: absolute; right: 0; top: 0; }
.hue { position: relative; width: 22px; background: linear-gradient(#f00, #f0f, #00f, #0ff, #0f0, #ff0, #f00); }
.hue svg { position: absolute; left: -11px; bottom: 91px; }
.picker-left .check { font-weight: 500; }
.picker-right { width: 228px; }
.picker-top { height: 182px; display: flex; justify-content: space-between; }
.compare { width: 68px; padding-top: 25px; text-align: center; color: #ccc; }
.compare i { display: block; height: 77px; background: #0f0; border: 1px solid #363; }
.gamut { width: 14px; margin-right: 20px; padding-top: 46px; }
.gamut i { display: block; width: 13px; height: 13px; margin-top: 4px; border: 1px solid #ddd; background: #3fa62b; }
.picker-actions { display: flex; flex-direction: column; gap: 10px; }
.picker-actions .pill { width: 104px; height: 30px; }
.picker-actions .apart { margin-top: 8px; }
.values { display: grid; grid-template-columns: 121px 1fr; }
.v { height: 26px; display: grid; grid-template-columns: 26px 26px 40px 1fr; align-items: center; color: #ccc; }
.v.lab { grid-template-columns: 26px 23px 50px; }
.v.cmyk { grid-template-columns: 49px 40px 1fr; }
.cmyk label { text-align: right; padding-right: 5px; }
.v span { padding-left: 4px; }
.v.cmyk span { padding-left: 6px; }
.space { margin-top: 6px; }
.hex { height: 26px; margin-top: 4px; display: flex; align-items: center; gap: 7px; }
.hexbox { width: 96px; height: 21px; padding: 0 2px; border: 1px solid #1560d0; background: var(--field); line-height: 19px; }
.hexbox mark { background: #2f65ad; color: #cfe2fa; }

.pointer { position: absolute; left: 1335px; top: 339px; }
.caption {
  position: absolute;
  left: 493px;
  top: 889px;
  height: 90px;
  padding: 0 10px 0 9px;
  border-radius: 14px;
  background: rgba(36, 36, 36, .66);
  color: #fff;
  font-size: 55px;
  font-weight: 500;
  line-height: 92px;
  white-space: nowrap;
  -webkit-text-stroke: 9px #000;
  paint-order: stroke fill;
}
.caption em { margin-left: 5px; font-style: normal; font-size: 72px; color: #ffe000; }
```
